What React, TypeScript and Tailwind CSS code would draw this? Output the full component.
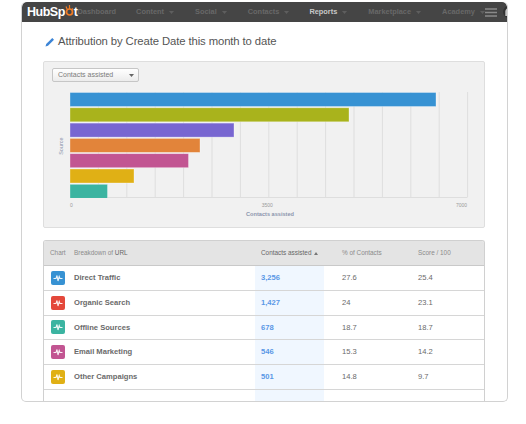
const nav: [string, boolean, boolean, number][] = [
  ["Dashboard", false, false, 20],
  ["Content", true, false, 21],
  ["Social", true, false, 21],
  ["Contacts", true, false, 20],
  ["Reports", true, true, 21],
  ["Marketplace", true, false, 21],
  ["Academy", true, false, 0],
];

const bars = [
  ["#3792d3", 366],
  ["#a9b31c", 279],
  ["#7866d1", 164],
  ["#e2843a", 130],
  ["#c25592", 118.5],
  ["#e0b015", 64],
  ["#3bb4a1", 37.5],
] as const;

const rows = [
  ["#3792d3", "Direct Traffic", "3,256", "27.6", "25.4"],
  ["#e4483b", "Organic Search", "1,427", "24", "23.1"],
  ["#3bb4a1", "Offline Sources", "678", "18.7", "18.7"],
  ["#c25592", "Email Marketing", "546", "15.3", "14.2"],
  ["#e0b015", "Other Campaigns", "501", "14.8", "9.7"],
];

const gridClass = "grid grid-cols-[30px_181px_69px_94px_1fr]";

function Caret({ color = "#5e5e5e" }: { color?: string }) {
  return (
    <svg width="5" height="3" viewBox="0 0 5 3" className="ml-[5px]">
      <path d="M0 0h5L2.5 3z" fill={color} />
    </svg>
  );
}

function Pulse({ color }: { color: string }) {
  return (
    <span className="flex h-[14px] w-[14px] items-center justify-center rounded-[2px]" style={{ background: color }}>
      <svg width="10" height="8" viewBox="0 0 10 8" fill="none">
        <path d="M0.5 4.5H3L4 1.5L5 7L6.2 2.5L7 4.5H9.5" stroke="#fff" strokeWidth="1.1" opacity=".9" />
      </svg>
    </span>
  );
}

export default function App() {
  return (
    <div className="h-[424px] w-[526px] overflow-hidden bg-white pl-[21px] pt-[2px] font-['Liberation_Sans',Arial,sans-serif]">
      <div className="h-[400px] w-[487px] overflow-hidden rounded-[5px] border border-[#d2d2d2] border-t-0 bg-white">
        <header className="flex h-[20px] items-center rounded-t-[5px] bg-[#454545] pl-[5px] pr-[5px]">
          <div className="flex w-[62px] items-center text-[12.5px] font-bold leading-none tracking-[-0.5px] text-white">
            <span>HubSp</span>
            <svg width="9" height="13" viewBox="0 0 9 13" className="-mt-[3px]">
              <circle cx="4.5" cy="8" r="3" fill="none" stroke="#f07b25" strokeWidth="1.7" />
              <path d="M4.5 1v4M1 2.5l1.5 3.5M8 4.5L6.5 6" stroke="#f07b25" strokeWidth="1.2" />
            </svg>
            <span>t</span>
          </div>
          <nav className="flex items-center text-[7.4px] font-bold leading-none">
            {nav.map(([label, caret, active, gap]) => (
              <span key={label} className="flex items-center" style={{ marginRight: gap }}>
                <span className={active ? "text-[#c8c8c8]" : "text-[#686868]"}>{label}</span>
                {caret && <Caret />}
              </span>
            ))}
          </nav>
          <div className="ml-auto flex items-center gap-[6px]">
            <svg width="12" height="9" viewBox="0 0 12 9"><path d="M0 1h12M0 4.5h12M0 8h12" stroke="#8a8a8a" strokeWidth="1.4" /></svg>
            <svg width="12" height="12" viewBox="0 0 12 12">
              <circle cx="6" cy="6" r="6" fill="#333" />
              <path d="M3.2 10V5.5a2.8 2.8 0 0 1 5.6 0V10" fill="none" stroke="#c4c4c4" strokeWidth="1.8" />
            </svg>
          </div>
        </header>

        <div className="px-[21px]">
          <div className="flex h-[39px] items-center pl-[2px]">
            <svg width="10" height="10" viewBox="0 0 10 10" className="mr-[3px]">
              <path d="M0.5 9.5L1.2 7L7.3 1L9 2.7L3 8.8z" fill="#3d85d6" />
            </svg>
            <h1 className="text-[11.3px] font-normal leading-none tracking-[-0.1px] text-[#555]">Attribution by Create Date this month to date</h1>
          </div>

          <section className="h-[167px] w-[442px] rounded-[2px] border border-[#dedede] bg-[#f1f1f1] pl-[8px] pt-[6px]">
            <div className="flex h-[14px] w-[87px] items-center justify-between rounded-[2px] border border-[#c6c6c6] bg-gradient-to-b from-white to-[#ececec] pl-[5px] pr-[4px] text-[7px] text-[#7b7b7b]">
              Contacts assisted
              <Caret color="#666" />
            </div>
            <div className="mt-[11px] flex h-[106px]">
              <div className="flex w-[18px] items-center justify-center">
                <span className="-rotate-90 text-[5.5px] text-[#8c95ad]">Source</span>
              </div>
              <svg width="400" height="106" viewBox="0 0 400 106" className="-mt-px">
                {Array.from({ length: 14 }, (_, i) => (
                  <rect key={i} x={28.4 * (i + 1) - 0.5} y="0" width="1" height="105" fill="#dedede" />
                ))}
                <rect x="0" y="105" width="397.5" height="1" fill="#dedede" />
                {bars.map(([color, width], i) => (
                  <rect key={color} x="0" y={0.5 + i * 15.3} width={width} height="14" fill={color} stroke="#fff" strokeOpacity=".45" strokeWidth=".7" />
                ))}
              </svg>
            </div>
            <div className="relative ml-[18px] h-[11px] w-[400px] pt-[4px] text-[5px] leading-none text-[#9a9a9a]">
              <div className="flex justify-between pr-[3px]">
                <span>0</span>
                <span className="ml-[6px]">3500</span>
                <span>7000</span>
              </div>
            </div>
            <div className="ml-[18px] w-[400px] pt-[2px] text-center text-[5.6px] font-bold leading-none text-[#8c95ad]">Contacts assisted</div>
          </section>

          <section className="mt-[12px] w-[442px] overflow-hidden rounded-t-[3px] border border-[#d0d0d0] border-b-0">
            <div className={`${gridClass} h-[25px] items-center border-b border-[#c9c9c9] bg-[#e4e4e4] text-[6.4px] leading-none text-[#8b8b8b]`}>
              <span className="pl-[6px]">Chart</span>
              <span>Breakdown of <b className="font-normal text-[#666]">URL</b></span>
              <span className="flex items-center pl-[6px] text-[#666]">Contacts assisted<svg width="4" height="3" viewBox="0 0 4 3" className="ml-[3px]"><path d="M0 3h4L2 0z" fill="#777" /></svg></span>
              <span className="pl-[18px]">% of Contacts</span>
              <span>Score / 100</span>
            </div>
            {rows.map(([color, name, contacts, pct, score]) => (
              <div key={name} className={`${gridClass} h-[24.8px] items-center border-b border-[#d6d6d6] text-[7.6px] leading-none text-[#6a6a6a]`}>
                <span className="pl-[7px]"><Pulse color={color} /></span>
                <span className="font-bold">{name}</span>
                <span className="flex h-full items-center bg-[#f0f7ff] pl-[6px] font-bold text-[#5a97e6]">{contacts}</span>
                <span className="pl-[18px]">{pct}</span>
                <span>{score}</span>
              </div>
            ))}
            <div className={`${gridClass} h-[12px]`}>
              <span />
              <span />
              <span className="bg-[#f0f7ff]" />
            </div>
          </section>
        </div>
      </div>
    </div>
  );
}
